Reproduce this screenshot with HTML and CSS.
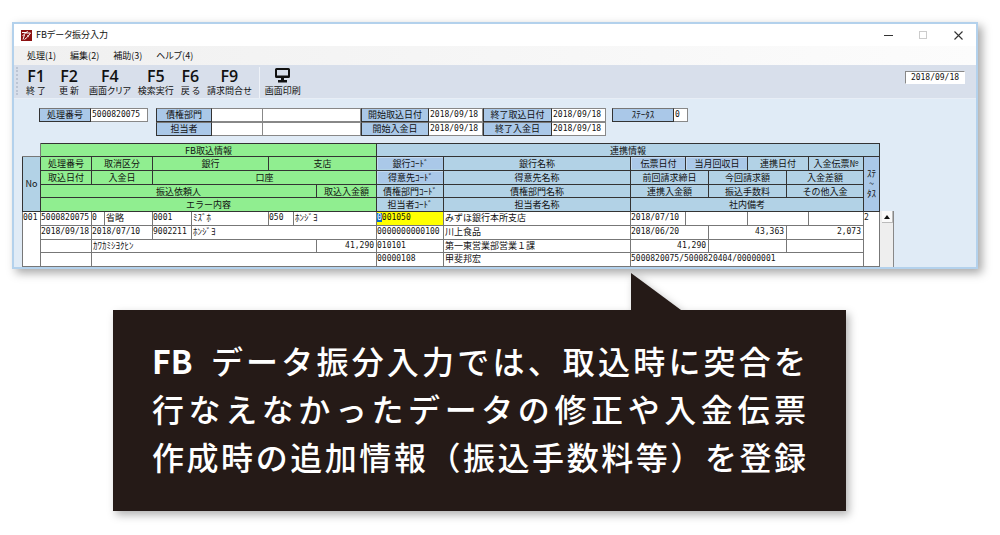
FILE: index.html
```html
<!DOCTYPE html>
<html lang="ja">
<head>
<meta charset="utf-8">
<meta name="viewport" content="width=device-width, initial-scale=1">
<title>FBデータ振分入力</title>
<link rel="stylesheet" href="styles.css">
</head>
<body>
<main class="page">
  <section class="window">
    <header class="titlebar">
      <svg class="app-icon" viewBox="0 0 11 11" aria-hidden="true">
        <rect width="11" height="11" fill="#8c1111"/>
        <path d="M1 2.500h4L1.500 6M3.600 4.500 2 9.500M6.500 1 5 3.500M5.500 3h4L6.500 7 3.500 9.500M6 5.500l1.500 1.200" fill="none" stroke="#fff" stroke-width="1"/>
      </svg>
      <h1 class="title">FBデータ振分入力</h1>
      <div class="window-controls">
        <button class="control" type="button" aria-label="最小化"><svg viewBox="0 0 9 9"><path d="M0 4.5h9" stroke="#333"/></svg></button>
        <button class="control" type="button" aria-label="最大化" disabled><svg viewBox="0 0 9 9"><rect x=".5" y=".5" width="7" height="7" fill="none" stroke="#ccc"/></svg></button>
        <button class="control" type="button" aria-label="閉じる"><svg viewBox="0 0 9 9"><path d="M.5.5l8 8M8.500.5l-8 8" stroke="#333" stroke-width="1.1"/></svg></button>
      </div>
    </header>

    <nav class="menu">
      <button type="button">処理(1)</button>
      <button type="button">編集(2)</button>
      <button type="button">補助(3)</button>
      <button type="button">ヘルプ(4)</button>
    </nav>

    <div class="toolbar">
      <span class="grip"></span>
      <button class="tool tool-wide" type="button"><b>F1</b><span>終 了</span></button>
      <button class="tool tool-wide" type="button"><b>F2</b><span>更 新</span></button>
      <button class="tool" type="button"><b>F4</b><span>画面クリア</span></button>
      <button class="tool" type="button"><b>F5</b><span>検索実行</span></button>
      <button class="tool" type="button"><b>F6</b><span>戻 る</span></button>
      <button class="tool" type="button"><b>F9</b><span>請求問合せ</span></button>
      <button class="tool tool-print" type="button">
        <svg viewBox="0 0 17 16" aria-hidden="true"><path d="M2.5 1h12a1.5 1.5 0 0 1 1.500 1.500v7a1.500 1.500 0 0 1-1.500 1.500h-12A1.500 1.500 0 0 1 1 9.500v-7A1.500 1.500 0 0 1 2.500 1zM4 13h9v2.500H4zM7 11h3v3H7z" fill="#111"/><path d="M3 3h11v5.500H3z" fill="#d8dfeb"/></svg>
        <span>画面印刷</span>
      </button>
      <input class="today" type="text" value="2018/09/18" aria-label="日付">
    </div>

    <div class="content">
      <form class="filters">
        <div class="group group-number">
          <label for="number">処理番号</label><input id="number" type="text" value="5000820075">
        </div>
        <div class="group group-main">
          <label for="dept">債権部門</label><input id="dept" type="text"><input type="text" aria-label="債権部門名">
          <label for="from-import">開始取込日付</label><input id="from-import" type="text" value="2018/09/18">
          <label for="to-import">終了取込日付</label><input id="to-import" type="text" value="2018/09/18">
          <label for="person">担当者</label><input id="person" type="text"><input type="text" aria-label="担当者名">
          <label for="from-pay">開始入金日</label><input id="from-pay" type="text" value="2018/09/18">
          <label for="to-pay">終了入金日</label><input id="to-pay" type="text" value="2018/09/18">
        </div>
        <div class="group group-status">
          <label for="status">ｽﾃｰﾀｽ</label><input id="status" type="text" value="0">
        </div>
      </form>

      <div class="list">
        <table class="records">
          <colgroup>
            <col class="w18"><col class="w51"><col class="w13"><col class="w48"><col class="w39"><col class="w77">
            <col class="w25"><col class="w23"><col class="w60"><col class="w67"><col class="w187"><col class="w55">
            <col class="w23"><col class="w39"><col class="w39"><col class="w22"><col class="w55"><col class="w16">
          </colgroup>
          <thead>
            <tr class="short">
              <td class="blank"></td>
              <th class="fb" colspan="8">FB取込情報</th>
              <th colspan="9">連携情報</th>
            </tr>
            <tr>
              <th rowspan="4">No</th>
              <th class="fb">処理番号</th><th class="fb" colspan="2">取消区分</th><th class="fb" colspan="2">銀行</th><th class="fb" colspan="3">支店</th>
              <th><button type="button">銀行ｺｰﾄﾞ</button></th><th>銀行名称</th>
              <th><button type="button">伝票日付</button></th><th colspan="2"><button type="button">当月回収日</button></th><th colspan="2">連携日付</th><th>入金伝票№</th>
              <th class="status-head" rowspan="4"><button type="button">ｽﾃ<br>~<br>ﾀｽ</button></th>
            </tr>
            <tr>
              <th class="fb">取込日付</th><th class="fb" colspan="2">入金日</th><th class="fb" colspan="5">口座</th>
              <th><button type="button">得意先ｺｰﾄﾞ</button></th><th>得意先名称</th>
              <th colspan="2">前回請求締日</th><th colspan="2">今回請求額</th><th colspan="2">入金差額</th>
            </tr>
            <tr class="short">
              <th class="fb" colspan="7">振込依頼人</th><th class="fb">取込入金額</th>
              <th>債権部門ｺｰﾄﾞ</th><th>債権部門名称</th>
              <th colspan="2">連携入金額</th><th colspan="2">振込手数料</th><th colspan="2">その他入金</th>
            </tr>
            <tr>
              <th class="fb" colspan="8">エラー内容</th>
              <th>担当者ｺｰﾄﾞ</th><th>担当者名称</th>
              <th colspan="6">社内備考</th>
            </tr>
          </thead>
          <tbody>
            <tr>
              <td class="num" rowspan="4">001</td>
              <td class="num">5000820075</td><td class="num">0</td><td>省略</td><td class="num">0001</td><td>ﾐｽﾞﾎ</td><td class="num">050</td><td colspan="2">ﾎﾝｼﾞﾖ</td>
              <td class="num active"><mark>0</mark>001050</td><td>みずほ銀行本所支店</td>
              <td class="num">2018/07/10</td><td colspan="2"></td><td colspan="2"></td><td></td>
              <td class="num" rowspan="4">2</td>
            </tr>
            <tr>
              <td class="num">2018/09/18</td><td class="num" colspan="2">2018/07/10</td><td class="num">9002211</td><td colspan="4">ﾎﾝｼﾞﾖ</td>
              <td class="num">0000000000100</td><td>川上食品</td>
              <td class="num" colspan="2">2018/06/20</td><td class="num amount" colspan="2">43,363</td><td class="num amount" colspan="2">2,073</td>
            </tr>
            <tr class="short">
              <td></td><td colspan="6">ｶﾜｶﾐｼﾖｸﾋﾝ</td><td class="num amount">41,290</td>
              <td class="num">010101</td><td>第一東営業部営業１課</td>
              <td class="num amount" colspan="2">41,290</td><td colspan="2"></td><td colspan="2"></td>
            </tr>
            <tr>
              <td></td><td colspan="7"></td>
              <td class="num">00000108</td><td>甲斐邦宏</td>
              <td class="num" colspan="6">5000820075/5000820404/00000001</td>
            </tr>
          </tbody>
        </table>
        <div class="scrollbar"><button type="button" aria-label="上へ"><svg viewBox="0 0 6 4"><path d="M3 0 6 4H0z" fill="#111"/></svg></button></div>
      </div>
    </div>
  </section>

  <aside class="callout">
    <svg class="pointer" viewBox="0 0 50 38" aria-hidden="true"><path d="M0 0 50 37v1H0z" fill="#251a17"/></svg>
    <p><strong>FB</strong> データ振分入力では、取込時に突合を</p>
    <p>行なえなかったデータの修正や入金伝票</p>
    <p>作成時の追加情報（振込手数料等）を登録</p>
  </aside>
</main>
</body>
</html>
```
FILE: styles.css
```css
* { box-sizing: border-box; }

body {
  margin: 0;
  background: #fff;
  color: #111;
  font: 9px/12px "Noto Sans CJK JP", sans-serif;
}

button, input {
  margin: 0;
  padding: 0;
  border: 0;
  background: none;
  color: inherit;
  font: inherit;
}

svg { display: block; }

.page { padding: 22px 22px 24px 12px; }

.window {
  border: 2px solid #b3d1ec;
  background: #e0ebf6;
  box-shadow: 4px 4px 9px rgba(0, 0, 0, .35);
}

.titlebar {
  display: flex;
  align-items: center;
  height: 22px;
  padding: 0 13px 0 7px;
  background: #fff;
}
.app-icon { width: 11px; height: 11px; }
.title {
  margin: 0 auto 0 4px;
  font-size: 9px;
  font-weight: 400;
  font-feature-settings: "palt";
}
.window-controls { display: flex; gap: 26px; }
.control { width: 9px; height: 9px; }

.menu {
  display: flex;
  gap: 14px;
  height: 19px;
  padding-left: 13px;
  background: linear-gradient(90deg, #f0f0f0, #fcfcfc);
  font-feature-settings: "palt";
}

.toolbar {
  display: flex;
  gap: 7px;
  height: 34px;
  padding: 2px 11px 0 2px;
  border-bottom: 1px solid #e8eef6;
  background: #d8dfeb;
  font-feature-settings: "palt";
}
.grip {
  width: 0;
  height: 28px;
  margin-right: -2px;
  border-left: 2px dotted #bcc5d4;
}
.tool {
  display: flex;
  flex-direction: column;
  align-items: center;
  white-space: nowrap;
}
.tool b {
  height: 18px;
  font: 600 16px/18px "Open Sans", sans-serif;
}
.tool-wide { min-width: 26px; }
.tool-print {
  padding-left: 5px;
  border-left: 1px solid #eef2f8;
}
.tool-print svg {
  width: 17px;
  height: 16px;
  margin-bottom: 2px;
}
.today {
  width: 60px;
  height: 13px;
  margin: 4px 0 0 auto;
  border: 1px solid #fff;
  border-top-color: #888;
  border-left-color: #888;
  background: #fff;
  font: 8px/11px "DejaVu Sans Mono", monospace;
  text-align: center;
}

.content { padding: 9px 83px 0 8px; }

.filters {
  display: flex;
  align-items: flex-start;
  height: 35px;
  padding-left: 17px;
}
.group { display: grid; grid-auto-rows: 14px; }
.group-number { grid-template-columns: 52px 57px; margin-right: 8px; }
.group-main { grid-template-columns: 56px 51px 98px 68px 54px 69px 54px; margin-right: 6px; }
.group-status { grid-template-columns: 62px 14px; }
.filters label {
  border: 1px solid #333;
  border-top-color: #777;
  background: #aac8e8;
  text-align: center;
  white-space: nowrap;
}
.filters input {
  min-width: 0;
  border: 1px solid #888;
  border-left-width: 0;
  background: #fff;
  font: 8px/10px "DejaVu Sans Mono", monospace;
  padding: 0 0 1px 1px;
}

.list { display: flex; }
.records {
  flex: 1;
  width: 100%;
  border-collapse: collapse;
  table-layout: fixed;
}
.records tr { height: 14px; }
.records .short { height: 13px; }
.records th, .records td {
  padding: 0;
  overflow: hidden;
  border: 1px solid #333;
  font-weight: 400;
  line-height: 12px;
  white-space: nowrap;
}
.records th { background: #b2d2e6; }
.records .fb { background: #90ee90; }
.records .blank { border-top: 0; border-left: 0; }
.records td { border-color: #777; vertical-align: top; }
.records tbody td { padding-left: 1px; background: #fff; }
.records tbody .num {
  padding-left: 0;
  font-family: "DejaVu Sans Mono", monospace;
  font-size: 8px;
}
.records tbody .amount { padding-right: 2px; text-align: right; }
.records tbody .active { background: #ff0; }
.records mark { background: #0a68c8; color: #fff; }
.records th button {
  width: 100%;
  height: 12px;
  border: 1px solid #c4daf0;
  border-width: 1px 0 0 1px;
  background: #aac8e8;
  line-height: 11px;
}
.records .status-head { height: 1px; background: #aac8e8; }
.records .status-head button { height: 100%; border: 0; line-height: 10px; }
.records .short th,
.records .short td { line-height: 11px; }

.w13 { width: 13px; }
.w16 { width: 16px; }
.w18 { width: 18px; }
.w22 { width: 22px; }
.w23 { width: 23px; }
.w25 { width: 25px; }
.w39 { width: 39px; }
.w48 { width: 48px; }
.w51 { width: 51px; }
.w55 { width: 55px; }
.w60 { width: 60px; }
.w67 { width: 67px; }
.w77 { width: 77px; }
.w187 { width: 187px; }

.scrollbar {
  flex: none;
  width: 14px;
  margin-top: 68px;
  padding-left: 2px;
  border-right: 1px solid #888;
  background: #eee;
}
.scrollbar button {
  display: grid;
  place-items: center;
  width: 11px;
  height: 12px;
  border: 1px solid #bbb;
  border-width: 0 1px 1px 0;
  background: #fafafa;
}
.scrollbar svg { width: 6px; height: 4px; }

.callout {
  position: relative;
  margin: 41px 132px 0 101px;
  padding: 26px 40px 31px 39px;
  background: #251a17;
  color: #fff;
  filter: drop-shadow(3px 4px 4px rgba(0, 0, 0, .3));
  font-size: 32px;
  font-weight: 500;
  line-height: 48px;
}
.callout p {
  margin: 0;
  text-align: justify;
  text-align-last: justify;
}
.callout strong { margin-right: 8px; font-weight: 700; }
.pointer {
  position: absolute;
  left: 518px;
  bottom: 100%;
  width: 50px;
  height: 38px;
  margin-bottom: -1px;
}
```
